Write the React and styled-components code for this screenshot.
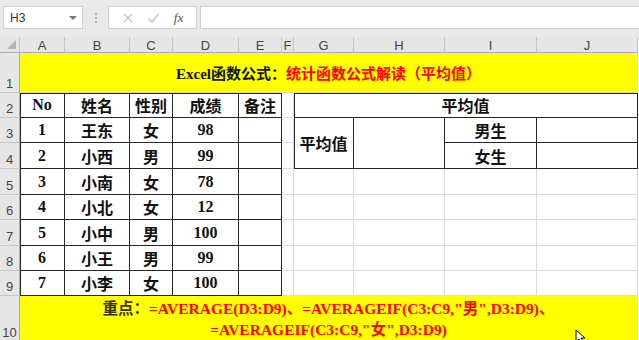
import styled, { createGlobalStyle } from "styled-components";

const GlobalStyle = createGlobalStyle`
  html, body {
    margin: 0;
    padding: 0;
    overflow: hidden;
    background: #ffffff;
  }
  * {
    box-sizing: border-box;
  }
`;

const Page = styled.div`
  position: relative;
  width: 639px;
  height: 340px;
  overflow: hidden;
  font-family: "Liberation Sans", Arial, sans-serif;
`;

const TopBar = styled.div`
  display: flex;
  align-items: flex-start;
  height: 37px;
  padding: 6px 0 0 3px;
  background: #e9e9e9;
`;

const NameBox = styled.div`
  position: relative;
  display: flex;
  align-items: center;
  width: 80px;
  height: 23px;
  padding-left: 6px;
  background: #fff;
  border: 1px solid #d0d0d0;
  font-size: 12px;
  color: #333;
`;

const DropArrow = styled.span`
  position: absolute;
  right: 5px;
  top: 9px;
  border-left: 4px solid transparent;
  border-right: 4px solid transparent;
  border-top: 4px solid #777;
`;

const Dots = styled.div`
  display: flex;
  flex-direction: column;
  gap: 2px;
  margin: 7px 11px 0 12px;
  span {
    width: 2px;
    height: 2px;
    background: #b8b8b8;
  }
`;

const FxBox = styled.div`
  display: flex;
  align-items: center;
  justify-content: space-around;
  width: 89px;
  height: 23px;
  padding: 0 6px;
  background: #fff;
  border: 1px solid #d0d0d0;
  margin-right: 3px;
`;

const Fx = styled.span`
  font-family: "Liberation Serif", serif;
  font-style: italic;
  font-size: 13px;
  color: #555;
`;

const FormulaInput = styled.div`
  flex: 1;
  height: 23px;
  background: #fff;
  border: 1px solid #d0d0d0;
  border-right: none;
`;

const Sheet = styled.div`
  display: grid;
  grid-template-columns: 20px 45px 65px 43px 66px 43px 12px 60px 91px 92px 101px;
  grid-template-rows: 16px 40px 25px 25px 26px 26px 25px 26px 25px 25px 46px;
`;

const dark = "#262626";

const Cell = styled.div`
  grid-column: ${(p) => p.$c} / span ${(p) => p.$cs || 1};
  grid-row: ${(p) => p.$r} / span ${(p) => p.$rs || 1};
  display: flex;
  align-items: center;
  justify-content: center;
  background: ${(p) => p.$bg || "#fff"};
  border-right: 1px solid ${(p) => (p.$box ? dark : "#dadada")};
  border-bottom: 1px solid ${(p) => (p.$box ? dark : "#dadada")};
  box-shadow: ${(p) =>
    [p.$top && `inset 0 1px 0 ${dark}`, p.$left && `inset 1px 0 0 ${dark}`]
      .filter(Boolean)
      .join(", ") || "none"};
  font-family: "Liberation Serif", "Noto Sans CJK SC", serif;
  font-weight: bold;
  font-size: 16px;
  color: #111;
  white-space: nowrap;
`;

const ColHead = styled.div`
  display: flex;
  align-items: center;
  justify-content: center;
  background: #e6e6e6;
  border-right: 1px solid #c6c6c6;
  border-bottom: 1px solid #ababab;
  font-size: 13px;
  color: #444;
  padding-top: 1px;
`;

const Corner = styled(ColHead)`
  position: relative;
  &::after {
    content: "";
    position: absolute;
    right: 3px;
    bottom: 3px;
    border-left: 9px solid transparent;
    border-bottom: 9px solid #b5b5b5;
  }
`;

const RowHead = styled.div`
  grid-column: 1;
  grid-row: ${(p) => p.$r};
  display: flex;
  align-items: flex-end;
  justify-content: center;
  padding-bottom: 1px;
  background: #e6e6e6;
  border-right: 1px solid #ababab;
  border-bottom: 1px solid #c6c6c6;
  font-size: 13px;
  color: #444;
`;

const Title = styled(Cell)`
  font-size: 15px;
`;

const Red = styled.span`
  color: #ff0000;
`;

const Note = styled(Cell)`
  flex-direction: column;
  align-items: center;
  justify-content: flex-start;
  padding-top: 2px;
  font-size: 15.5px;
  line-height: 21px;
  color: #ff0000;
`;

const Lead = styled.span`
  color: #3a3300;
`;

const Cursor = styled.svg`
  position: absolute;
  left: 575px;
  top: 329px;
`;

const students = [
  ["1", "王东", "女", "98"],
  ["2", "小西", "男", "99"],
  ["3", "小南", "女", "78"],
  ["4", "小北", "女", "12"],
  ["5", "小中", "男", "100"],
  ["6", "小王", "男", "99"],
  ["7", "小李", "女", "100"],
];

const letters = ["A", "B", "C", "D", "E", "F", "G", "H", "I", "J"];

export default function App() {
  const plain = [];
  // empty cells in F..J outside the right-hand table
  for (let r = 2; r <= 9; r++) {
    plain.push(<Cell key={`f${r}`} $c={7} $r={r + 1} />);
    if (r >= 5) {
      for (let c = 8; c <= 11; c++) {
        plain.push(<Cell key={`${c}-${r}`} $c={c} $r={r + 1} />);
      }
    }
  }

  const rows = students.flatMap((s, ri) =>
    [...s, ""].map((v, ci) => (
      <Cell key={`${ri}-${ci}`} $c={ci + 2} $r={ri + 4} $box $left={ci === 0}>
        {v}
      </Cell>
    ))
  );

  return (
    <Page>
      <GlobalStyle />
      <TopBar>
        <NameBox>
          H3
          <DropArrow />
        </NameBox>
        <Dots>
          <span />
          <span />
          <span />
        </Dots>
        <FxBox>
          <svg width="12" height="12" viewBox="0 0 12 12">
            <path d="M2 2 L10 10 M10 2 L2 10" stroke="#c4c4c4" strokeWidth="1.3" />
          </svg>
          <svg width="13" height="12" viewBox="0 0 13 12">
            <path d="M1.5 6.5 L5 10 L11.5 2" stroke="#c4c4c4" strokeWidth="1.6" fill="none" />
          </svg>
          <Fx>fx</Fx>
        </FxBox>
        <FormulaInput />
      </TopBar>

      <Sheet>
        <Corner />
        {letters.map((l) => (
          <ColHead key={l}>{l}</ColHead>
        ))}
        {Array.from({ length: 10 }, (_, i) => (
          <RowHead key={i} $r={i + 2}>
            {i + 1}
          </RowHead>
        ))}

        <Title $c={2} $cs={10} $r={2} $bg="#ffff00">
          Excel函数公式：<Red>统计函数公式解读（平均值）</Red>
        </Title>

        {["No", "姓名", "性别", "成绩", "备注"].map((h, i) => (
          <Cell key={h} $c={i + 2} $r={3} $box $top $left={i === 0}>
            {h}
          </Cell>
        ))}
        {rows}
        {plain}

        <Cell $c={8} $cs={4} $r={3} $box $top $left>
          平均值
        </Cell>
        <Cell $c={8} $r={4} $rs={2} $box $left>
          平均值
        </Cell>
        <Cell $c={9} $r={4} $rs={2} $box />
        <Cell $c={10} $r={4} $box>
          男生
        </Cell>
        <Cell $c={11} $r={4} $box />
        <Cell $c={10} $r={5} $box>
          女生
        </Cell>
        <Cell $c={11} $r={5} $box />

        <Note $c={2} $cs={10} $r={11} $bg="#ffff00">
          <div>
            <Lead>重点：</Lead>=AVERAGE(D3:D9)、=AVERAGEIF(C3:C9,"男",D3:D9)、
          </div>
          <div>=AVERAGEIF(C3:C9,"女",D3:D9)</div>
        </Note>
      </Sheet>

      <Cursor width="12" height="14" viewBox="0 0 12 14">
        <path d="M1 1 L1 13 L4 10 L6.5 14 L8.5 13 L6 9 L10 9 Z" fill="#fff" stroke="#000" strokeWidth="1" />
      </Cursor>
    </Page>
  );
}
